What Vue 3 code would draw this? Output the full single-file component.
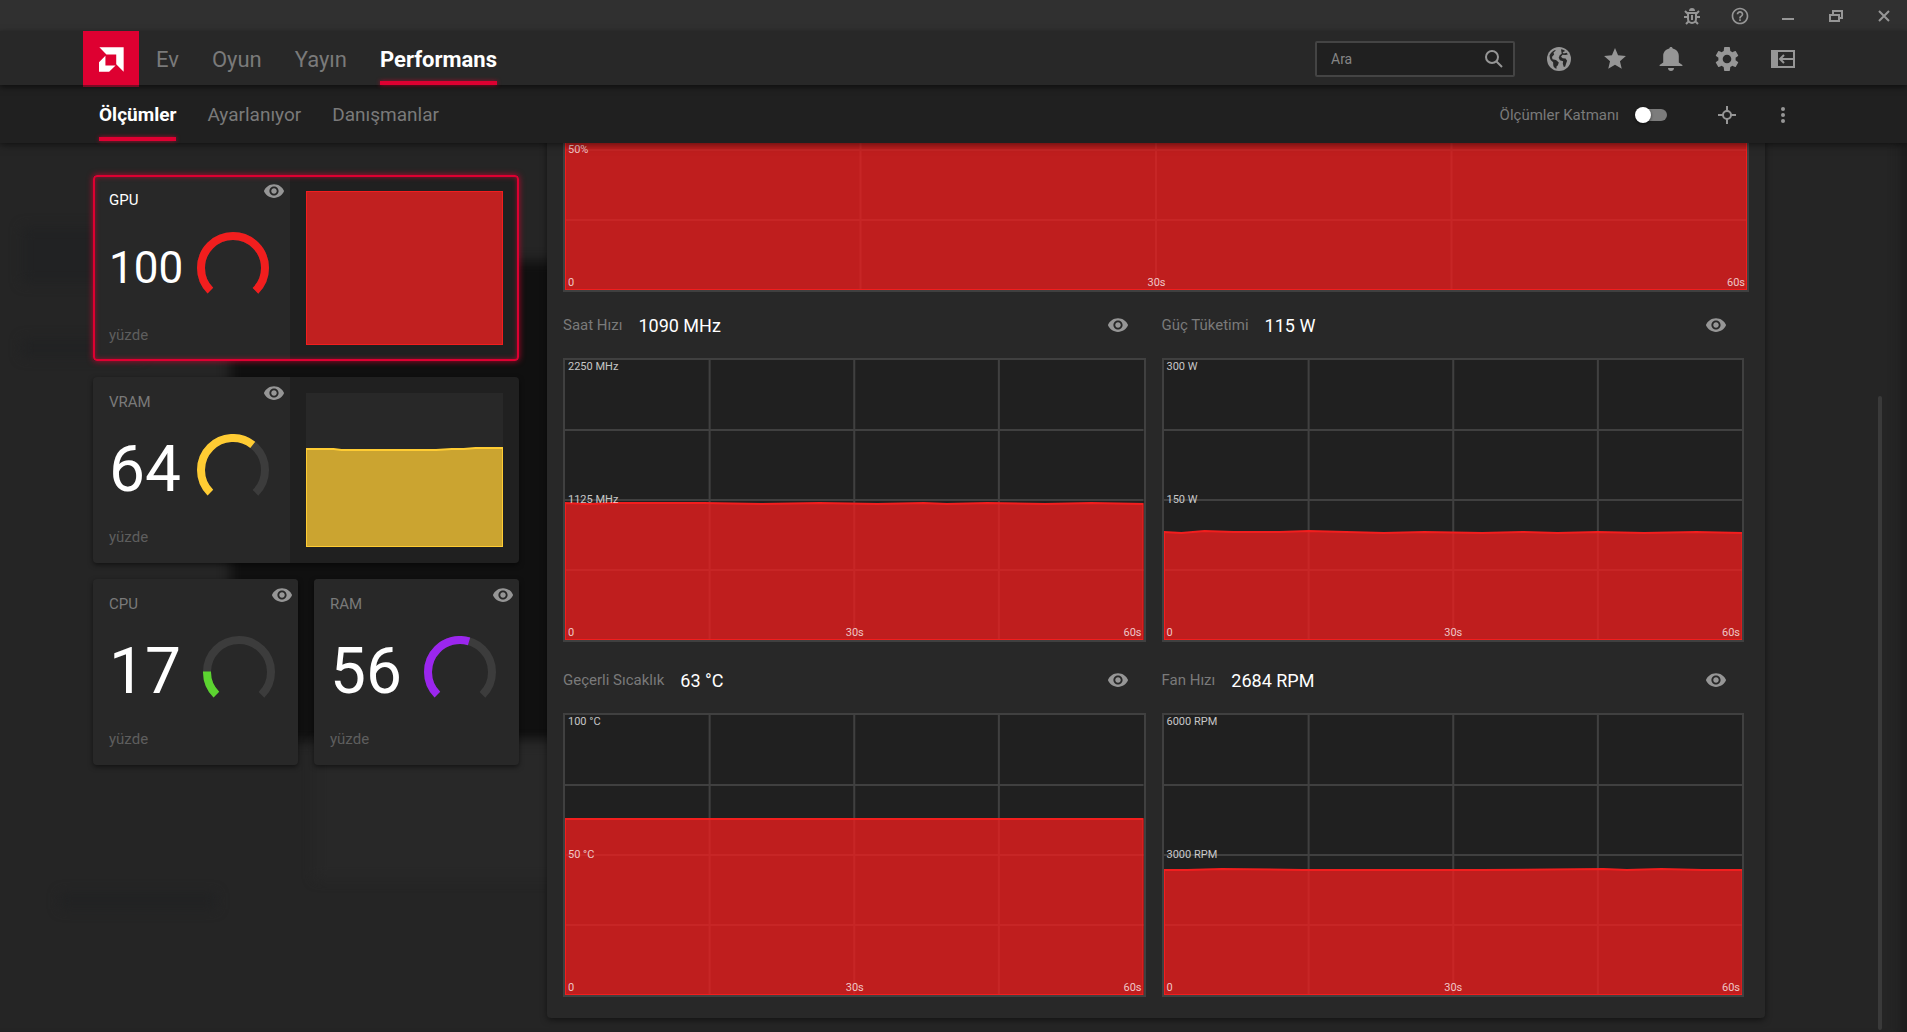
<script setup>
import { ref } from 'vue'

const search = ref('')
const overlay = ref(false)

const mainTabs = [
  { label: 'Ev' },
  { label: 'Oyun' },
  { label: 'Yayın' },
  { label: 'Performans', active: true }
]
const subTabs = [
  { label: 'Ölçümler', active: true },
  { label: 'Ayarlanıyor' },
  { label: 'Danışmanlar' }
]

const RED = '#f21e1e'
const EYE =
  'M12 4.5C7 4.5 2.73 7.61 1 12c1.73 4.39 6 7.5 11 7.5s9.27-3.11 11-7.5c-1.73-4.39-6-7.5-11-7.5z' +
  'M12 17c-2.76 0-5-2.24-5-5s2.24-5 5-5 5 2.24 5 5-2.24 5-5 5z' +
  'm0-8c-1.66 0-3 1.34-3 3s1.34 3 3 3 3-1.34 3-3-1.34-3-3-3z'

// Sparkline points are given in a 100 x 154 space, chart points in 100 x 280
const cards = [
  { id: 'gpu', name: 'GPU', value: 100, color: RED, wide: true, selected: true, points: '0,0 100,0' },
  {
    id: 'vram', name: 'VRAM', value: 64, color: '#ffcc33', wide: true,
    points: '0,56 14,56 18,57 66,57 74,56 80,56 86,55 100,55'
  },
  { id: 'cpu', name: 'CPU', value: 17, color: '#5cd430' },
  { id: 'ram', name: 'RAM', value: 56, color: '#9b26ee' }
]

const usage = { mid: '50%', points: '0,0 100,0' }
const metrics = [
  {
    name: 'Saat Hızı', value: '1090 MHz', max: '2250 MHz', mid: '1125 MHz',
    points: '0,143 4,144 8,143 18,143 24,143 34,144 44,143 54,144 62,143 66,144 73,143 83,144 91,143 100,144'
  },
  {
    name: 'Güç Tüketimi', value: '115 W', max: '300 W', mid: '150 W',
    points: '0,172 3,173 7,171 12,172 20,172 25,171 38,173 45,172 55,173 62,172 68,173 75,172 83,173 92,172 100,173'
  },
  {
    name: 'Geçerli Sıcaklık', value: '63 °C', max: '100 °C', mid: '50 °C',
    points: '0,104 100,104'
  },
  {
    name: 'Fan Hızı', value: '2684 RPM', max: '6000 RPM', mid: '3000 RPM',
    points: '0,155 4,155 10,154 24,155 33,155 42,155 55,155 76,154 80,155 86,154 93,155 100,155'
  }
]

const CIRC = 2 * Math.PI * 32
const arc = (percent) => `${(CIRC * 0.75 * percent) / 100} ${CIRC}`
const area = (points, height) => `0,${height} ${points} 100,${height}`
</script>

<template>
  <div class="app">
    <header class="titlebar">
      <button type="button" aria-label="Hata bildir">
        <svg viewBox="0 0 24 24" width="24" height="24" fill="none" stroke="currentColor" stroke-width="2">
          <path d="M8 9h8v6a4 4 0 0 1-8 0zM8 13H4M20 13h-4M8 10L5 7M16 10l3-3M9 17l-3 3M15 17l3 3M12 11v5" />
          <path d="M9 7a3 3 0 0 1 6 0z" fill="currentColor" stroke="none" />
        </svg>
      </button>
      <button type="button" aria-label="Yardım">
        <svg viewBox="0 0 24 24" width="20" height="20" fill="currentColor">
          <path d="M11 18h2v-2h-2v2zm1-16C6.48 2 2 6.48 2 12s4.48 10 10 10 10-4.48 10-10S17.52 2 12 2zm0 18c-4.41 0-8-3.59-8-8s3.59-8 8-8 8 3.59 8 8-3.59 8-8 8zm0-14c-2.21 0-4 1.79-4 4h2c0-1.1.9-2 2-2s2 .9 2 2c0 2-3 1.75-3 5h2c0-2.25 3-2.5 3-5 0-2.21-1.79-4-4-4z" />
        </svg>
      </button>
      <button type="button" aria-label="Küçült">
        <svg viewBox="0 0 24 24" width="24" height="24" fill="currentColor"><path d="M6 14h12v2H6z" /></svg>
      </button>
      <button type="button" aria-label="Önceki boyut">
        <svg viewBox="0 0 24 24" width="24" height="24" fill="none" stroke="currentColor" stroke-width="2">
          <path d="M6 11h9v6H6zM9 10V7h9v7h-3" />
        </svg>
      </button>
      <button type="button" aria-label="Kapat">
        <svg viewBox="0 0 24 24" width="24" height="24" fill="none" stroke="currentColor" stroke-width="2">
          <path d="M7 7l10 10M17 7L7 17" />
        </svg>
      </button>
    </header>

    <nav class="mainbar">
      <a class="logo" href="#" aria-label="AMD">
        <svg viewBox="0 0 74 74" width="25" height="25" fill="#fff">
          <path d="M1 1h72v72L51 51V22H22z" />
          <path d="M19 26v29h30L30 73H0V45z" />
        </svg>
      </a>
      <ul class="tabs">
        <li v-for="t in mainTabs" :key="t.label">
          <a href="#" :class="{ active: t.active }">{{ t.label }}</a>
        </li>
      </ul>
      <div class="tools">
        <label class="search">
          <input v-model="search" type="text" placeholder="Ara" aria-label="Ara" />
          <svg viewBox="0 0 20 20" width="20" height="20" fill="none" stroke="currentColor" stroke-width="2">
            <circle cx="8" cy="8" r="6" /><path d="M12 12l6 6" />
          </svg>
        </label>
        <button type="button" aria-label="Web">
          <svg viewBox="0 0 24 24" width="24" height="24">
            <circle cx="12" cy="12" r="12" fill="currentColor" />
            <path fill="#282828" d="M2.5 8.5C3.500 6 5.500 4 8 3l.8.6-2.300 2 .6 2-2.100 2.400.5 2.200 3.500.8 2.800 2.600-.9 2.600-1.400 1.400v2.200c-1.800-.6-2.800-1.600-3.200-3.300l-.2-3.300-2.400-2.200-.9-2.500z" />
            <path fill="#282828" d="M14 2.300c1.600.2 3 .8 4.200 1.600l-2.600 1.300 1 1.200 3.200-.6 1 1.600-2.400.6-2.900-.3-1.500 2 1.700 1.500 2.900.2 1.500 2.400-.9 2.500-1 3.200-1.400.6-1-3.400.3-2.400-3.200-1-1.200-2.500 1-2.500 2-1.500z" />
          </svg>
        </button>
        <button type="button" aria-label="Favoriler">
          <svg viewBox="1 1 22 22" width="24" height="24" fill="currentColor">
            <path d="M12 17.27L18.18 21l-1.64-7.03L22 9.24l-7.19-.61L12 2 9.19 8.63 2 9.24l5.46 4.73L5.82 21z" />
          </svg>
        </button>
        <button type="button" aria-label="Bildirimler">
          <svg viewBox="0 0 24 24" width="24" height="24" fill="currentColor">
            <path d="M12 0c-1 0-1.6.7-1.7 1.6C6.6 2.4 4.2 5.3 4.2 9v6.5L.6 18v1h22.800v-1l-3.600-2.500V9c0-3.700-2.400-6.600-6.100-7.400C13.600.7 13 0 12 0zM9 21h6c0 1.700-1.300 3-3 3s-3-1.300-3-3z" />
          </svg>
        </button>
        <button type="button" aria-label="Ayarlar">
          <svg viewBox="2 2 20 20" width="24" height="24" fill="currentColor">
            <path d="M19.140 12.940c.04-.3.06-.61.06-.94 0-.32-.02-.64-.07-.94l2.030-1.580c.18-.14.23-.41.12-.61l-1.920-3.320c-.12-.22-.37-.29-.59-.22l-2.390.96c-.5-.38-1.030-.7-1.620-.94L14.400 2.400c-.04-.24-.24-.41-.48-.41h-3.840c-.24 0-.43.17-.47.41L9.250 5.350C8.660 5.590 8.120 5.920 7.630 6.290L5.240 5.330c-.22-.08-.47 0-.59.22L2.740 8.870c-.12.21-.08.47.12.61l2.030 1.580c-.05.3-.09.63-.09.94s.02.64.07.94l-2.030 1.580c-.18.14-.23.41-.12.61l1.920 3.320c.12.22.37.29.59.22l2.390-.96c.5.38 1.030.7 1.620.94l.36 2.950c.05.24.24.41.48.41h3.840c.24 0 .44-.17.47-.41l.36-2.950c.59-.24 1.130-.56 1.620-.94l2.390.96c.22.08.47 0 .59-.22l1.920-3.320c.12-.22.07-.47-.12-.61l-2.010-1.580zM12 15.600c-1.980 0-3.600-1.620-3.600-3.600s1.620-3.600 3.600-3.600 3.600 1.620 3.600 3.600-1.620 3.600-3.600 3.600z" />
          </svg>
        </button>
        <button type="button" aria-label="Kenar çubuğu">
          <svg viewBox="0 0 24 24" width="24" height="24" fill="none" stroke="currentColor" stroke-width="2">
            <path d="M1 4h22v16H1z" /><path d="M0 3h7v18H0z" fill="currentColor" stroke="none" />
            <path d="M9 12h14M13 8l-4 4 4 4" />
          </svg>
        </button>
      </div>
    </nav>

    <nav class="subbar">
      <ul class="tabs small">
        <li v-for="t in subTabs" :key="t.label">
          <a href="#" :class="{ active: t.active }">{{ t.label }}</a>
        </li>
      </ul>
      <div class="tools">
        <label class="overlay">
          <span>Ölçümler Katmanı</span>
          <input v-model="overlay" class="switch" type="checkbox" />
        </label>
        <button type="button" class="target" aria-label="Konum">
          <svg viewBox="0 0 24 24" width="24" height="24" fill="none" stroke="currentColor" stroke-width="2">
            <circle cx="12" cy="12" r="4" /><path d="M12 3v5M12 16v5M3 12h5M16 12h5" />
          </svg>
        </button>
        <button type="button" aria-label="Diğer">
          <svg viewBox="0 0 24 24" width="24" height="24" fill="currentColor">
            <circle cx="12" cy="6" r="2" /><circle cx="12" cy="12" r="2" /><circle cx="12" cy="18" r="2" />
          </svg>
        </button>
      </div>
    </nav>

    <main class="content">
      <div class="backdrop" aria-hidden="true">
        <i class="shade window"></i>
        <i class="shade light"></i>
        <i class="shade line a"></i>
        <i class="shade line b"></i>
        <i class="shade line c"></i>
      </div>

      <div class="cards">
        <section
          v-for="c in cards"
          :key="c.id"
          class="card"
          :class="{ wide: c.wide, selected: c.selected }"
        >
          <div class="info">
            <button type="button" class="eye" aria-label="Göster">
              <svg viewBox="0 0 24 24" width="22" height="22" fill="currentColor"><path :d="EYE" /></svg>
            </button>
            <h2>{{ c.name }}</h2>
            <div class="reading">
              <span class="number" :class="{ long: c.value > 99 }">{{ c.value }}</span>
              <svg class="gauge" viewBox="0 0 72 72" width="72" height="72" fill="none" stroke-width="8">
                <g transform="rotate(135 36 36)">
                  <circle cx="36" cy="36" r="32" stroke="#3c3c3c" :stroke-dasharray="arc(100)" />
                  <circle cx="36" cy="36" r="32" :stroke="c.color" :stroke-dasharray="arc(c.value)" />
                </g>
              </svg>
            </div>
            <span class="unit">yüzde</span>
          </div>
          <div v-if="c.wide" class="spark">
            <svg viewBox="0 0 100 154" preserveAspectRatio="none">
              <polygon :points="area(c.points, 154)" :fill="c.color" fill-opacity="0.76" :stroke="c.color" />
            </svg>
          </div>
        </section>
      </div>

      <div class="panel">
        <div class="chart">
          <svg class="plot">
            <g class="grid">
              <line v-for="p in ['25%', '50%', '75%']" :key="'v' + p" :x1="p" :x2="p" y1="0" y2="100%" />
              <line v-for="p in ['25%', '50%', '75%']" :key="'h' + p" :y1="p" :y2="p" x1="0" x2="100%" />
            </g>
            <svg viewBox="0 0 100 280" preserveAspectRatio="none" width="100%" height="100%">
              <polygon class="fill" :points="area(usage.points, 280)" />
            </svg>
          </svg>
          <span class="tick mid">{{ usage.mid }}</span>
          <div class="axis"><span>0</span><span>30s</span><span>60s</span></div>
        </div>

        <div class="metrics">
          <section v-for="m in metrics" :key="m.name">
            <div class="head">
              <h3>{{ m.name }}</h3>
              <strong>{{ m.value }}</strong>
              <button type="button" aria-label="Göster">
                <svg viewBox="0 0 24 24" width="22" height="22" fill="currentColor"><path :d="EYE" /></svg>
              </button>
            </div>
            <div class="chart">
              <svg class="plot">
                <g class="grid">
                  <line v-for="p in ['25%', '50%', '75%']" :key="'v' + p" :x1="p" :x2="p" y1="0" y2="100%" />
                  <line v-for="p in ['25%', '50%', '75%']" :key="'h' + p" :y1="p" :y2="p" x1="0" x2="100%" />
                </g>
                <svg viewBox="0 0 100 280" preserveAspectRatio="none" width="100%" height="100%">
                  <polygon class="fill" :points="area(m.points, 280)" />
                </svg>
              </svg>
              <span class="tick max">{{ m.max }}</span>
              <span class="tick mid">{{ m.mid }}</span>
              <div class="axis"><span>0</span><span>30s</span><span>60s</span></div>
            </div>
          </section>
        </div>
      </div>

      <div class="scrollbar" aria-hidden="true"></div>
    </main>
  </div>
</template>

<style>
body {
  margin: 0;
  background: #252525;
}
</style>

<style scoped>
* {
  box-sizing: border-box;
}
.app {
  display: flex;
  flex-direction: column;
  height: 100vh;
  overflow: hidden;
  color: #fff;
  background: #252525;
  font-family: Roboto, "Noto Sans", sans-serif;
}
button {
  display: flex;
  align-items: center;
  justify-content: center;
  flex: none;
  width: 24px;
  height: 24px;
  padding: 0;
  border: 0;
  background: none;
  color: #969696;
}
svg {
  flex: none;
  display: block;
}
h2,
h3,
ul {
  margin: 0;
  padding: 0;
  list-style: none;
  font-weight: 400;
}
a {
  color: inherit;
  text-decoration: none;
}

.titlebar {
  display: flex;
  flex: none;
  align-items: center;
  justify-content: flex-end;
  gap: 24px;
  height: 31px;
  padding-right: 11px;
  background: #303030;
}
.mainbar,
.subbar {
  position: relative;
  display: flex;
  flex: none;
  padding-right: 112px;
}
.mainbar {
  z-index: 3;
  height: 54px;
  padding-left: 83px;
  background: #282828;
  box-shadow: 0 2px 6px rgba(0, 0, 0, 0.6);
}
.subbar {
  z-index: 2;
  height: 58px;
  padding-left: 99px;
  background: #202020;
  box-shadow: 0 1px 8px rgba(0, 0, 0, 0.6);
}
.logo {
  display: flex;
  align-items: center;
  justify-content: center;
  width: 56px;
  background: #de0031;
  border-bottom: 2px solid #7a0a24;
  height: 56px;
  padding-top: 2px;
}
.tabs {
  display: flex;
  gap: 33px;
  padding-left: 17px;
  color: #7a7a7a;
  font-size: 22px;
}
.tabs.small {
  gap: 31px;
  padding: 0 0 2px;
  font-size: 19px;
}
.tabs a {
  display: flex;
  align-items: center;
  height: 100%;
  padding-top: 2px;
}
.tabs li {
  position: relative;
}
.tabs .active {
  color: #fff;
  font-weight: 700;
}
.tabs .active::after {
  content: "";
  position: absolute;
  right: 0;
  bottom: 0;
  left: 0;
  height: 4px;
  background: #de0031;
  box-shadow: 0 0 4px rgba(222, 0, 49, 0.7);
}
.tools {
  display: flex;
  align-items: center;
  gap: 32px;
  margin-left: auto;
  padding-top: 2px;
}
.search {
  display: flex;
  align-items: center;
  width: 200px;
  height: 36px;
  padding: 0 9px 0 14px;
  border: 2px solid #444;
  border-radius: 2px;
  background: #202020;
  color: #969696;
}
.search input {
  flex: 1;
  min-width: 0;
  padding: 0;
  border: 0;
  outline: 0;
  background: none;
  color: #fff;
  font: inherit;
  font-size: 14px;
}
.search input::placeholder {
  color: #858585;
  opacity: 1;
}
.overlay {
  display: flex;
  align-items: center;
  gap: 16px;
  color: #7a7a7a;
  font-size: 15px;
}
.target {
  margin-left: 16px;
}
.switch {
  appearance: none;
  position: relative;
  width: 32px;
  height: 16px;
  margin: 0;
}
.switch::before {
  content: "";
  position: absolute;
  inset: 2px 0 2px 4px;
  border-radius: 6px;
  background: #7c7c7c;
}
.switch::after {
  content: "";
  position: absolute;
  top: 0;
  left: 0;
  width: 16px;
  height: 16px;
  border-radius: 50%;
  background: #fff;
  box-shadow: 0 1px 3px rgba(0, 0, 0, 0.6);
}
.switch:checked::after {
  left: 16px;
}

.content {
  position: relative;
  display: flex;
  flex: 1;
  align-items: flex-start;
  gap: 28px;
  min-height: 0;
  padding: 32px 142px 14px 93px;
  overflow: hidden;
  box-shadow: inset -16px 0 12px -10px #1c1c1c;
}
.backdrop {
  position: absolute;
  inset: 0;
}
.shade {
  position: absolute;
  filter: blur(6px);
}
.shade.window {
  top: 118px;
  left: 230px;
  width: 700px;
  height: 480px;
  background: #101010;
}
.shade.light {
  top: 600px;
  left: 315px;
  width: 600px;
  height: 136px;
  background: #282828;
}
.shade.line {
  background: #212223;
}
.shade.a {
  top: 84px;
  left: 22px;
  width: 120px;
  height: 56px;
}
.shade.b {
  top: 196px;
  left: 22px;
  width: 120px;
  height: 18px;
}
.shade.c {
  top: 750px;
  left: 60px;
  width: 156px;
  height: 16px;
}

.cards {
  position: relative;
  display: grid;
  flex: 0 0 426px;
  grid-template-columns: 1fr 1fr;
  gap: 16px;
}
.card {
  position: relative;
  display: flex;
  height: 186px;
  border-radius: 4px;
  background: #202020;
  box-shadow: 0 2px 5px rgba(0, 0, 0, 0.5);
  overflow: hidden;
}
.card.wide {
  grid-column: span 2;
}
.card.selected {
  box-shadow: 0 0 6px rgba(222, 0, 49, 0.8);
}
.card.selected::after {
  content: "";
  position: absolute;
  inset: 0;
  border: 2px solid #de0031;
  border-radius: 4px;
  box-shadow: inset 0 0 5px rgba(222, 0, 49, 0.6);
  pointer-events: none;
}
.info {
  position: relative;
  display: flex;
  flex: 1;
  flex-direction: column;
  padding: 15px 23px 16px 16px;
  background: #282828;
}
.wide .info {
  flex: 0 0 197px;
  padding-right: 21px;
}
.eye {
  position: absolute;
  top: 4px;
  right: 4px;
}
.info h2,
.unit {
  color: #7a7a7a;
  font-size: 15px;
  line-height: 20px;
}
.info .unit {
  color: #5e5e5e;
}
.selected .info h2 {
  color: #fff;
}
.reading {
  display: flex;
  flex: 1;
  align-items: center;
  justify-content: space-between;
}
.number {
  font-size: 64px;
  line-height: 72px;
}
.number.long {
  font-size: 44px;
}
.spark {
  flex: 1;
  padding: 16px;
}
.spark svg {
  width: 100%;
  height: 100%;
  background: #282828;
}
.spark polygon {
  stroke-width: 2;
  vector-effect: non-scaling-stroke;
}

.panel {
  position: relative;
  flex: 1;
  align-self: flex-end;
  min-width: 0;
  padding: 16px;
  border-radius: 4px;
  background: #282828;
  box-shadow: 0 2px 6px rgba(0, 0, 0, 0.5);
}
.metrics {
  display: grid;
  grid-template-columns: 1fr 1fr;
  gap: 0 16px;
  padding-right: 5px;
}
.metrics section {
  padding-bottom: 5px;
}
.head {
  display: flex;
  align-items: center;
  gap: 16px;
  height: 66px;
  padding-right: 16px;
}
.head h3 {
  color: #7a7a7a;
  font-size: 15px;
}
.head strong {
  font-size: 18px;
  font-weight: 400;
}
.head button {
  margin-left: auto;
}
.chart {
  position: relative;
  height: 284px;
  border: 2px solid #404040;
  background: #202020;
}
.plot {
  width: 100%;
  height: 100%;
}
.grid line {
  stroke: #404040;
  stroke-width: 2;
}
.fill {
  fill: #f21e1e;
  fill-opacity: 0.76;
  stroke: #f21e1e;
  stroke-width: 2;
  vector-effect: non-scaling-stroke;
}
.tick,
.axis {
  position: absolute;
  left: 3px;
  color: rgba(255, 255, 255, 0.75);
  font-size: 11px;
  line-height: 14px;
}
.tick.max {
  top: 0;
}
.tick.mid {
  top: 133px;
}
.axis {
  right: 2px;
  bottom: 0;
  display: grid;
  grid-template-columns: 1fr auto 1fr;
}
.axis span:last-child {
  text-align: right;
}

.scrollbar {
  position: absolute;
  right: 25px;
  bottom: 2px;
  width: 4px;
  height: 634px;
  border-radius: 2px;
  background: #3a3a3a;
}
</style>
